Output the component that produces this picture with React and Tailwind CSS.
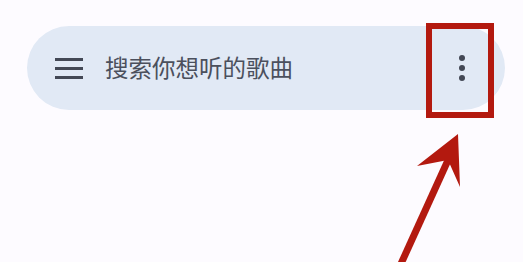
import React from "react";

// Search bar with overflow menu, annotated by a red box and arrow
const App = () => {
  return (
    <div className="relative w-[523px] h-[262px] overflow-hidden bg-[#fdfbff] font-['Noto_Sans','Noto_Sans_CJK_SC',sans-serif]">
      <div className="pt-[26px] pl-[27px] pr-[18px]">
        <div className="flex items-center h-[84px] rounded-full bg-[#e1e9f5] pl-[28px] pr-[40px]">
          {/* Hamburger */}
          <div className="flex flex-col gap-[6px] w-[28px]">
            <span className="block h-[3px] bg-[#434855]" />
            <span className="block h-[3px] bg-[#434855]" />
            <span className="block h-[3px] bg-[#434855]" />
          </div>

          <p className="ml-[22px] flex-1 text-[23.5px] leading-none text-[#4b505d] font-['Noto_Sans_CJK_SC',sans-serif]">
            搜索你想听的歌曲
          </p>

          {/* More menu */}
          <div className="flex flex-col gap-[4px] items-center">
            <span className="block w-[6px] h-[6px] rounded-full bg-[#434855]" />
            <span className="block w-[6px] h-[6px] rounded-full bg-[#434855]" />
            <span className="block w-[6px] h-[6px] rounded-full bg-[#434855]" />
          </div>
        </div>
      </div>

      {/* Annotation box */}
      <div className="absolute left-[426px] top-[23px] w-[68px] h-[95px] border-[6px] border-[#b3190f]" />

      {/* Annotation arrow */}
      <svg className="absolute inset-0" width="523" height="262" viewBox="0 0 523 262">
        <line x1="449" y1="158" x2="400" y2="266" stroke="#b3190f" strokeWidth="7" />
        <polygon points="458,134 460,187 448,160 417,166" fill="#b3190f" />
      </svg>
    </div>
  );
};

export default App;
